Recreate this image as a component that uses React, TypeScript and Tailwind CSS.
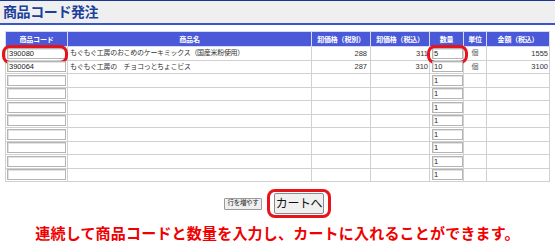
import React from 'react'

type Row = {
  code: string
  name: string
  ex: string
  inc: string
  qty: string
  unit: string
  amt: string
  mark?: boolean
}

const rows: Row[] = [
  {
    code: '390080',
    name: 'もぐもぐ工房のおこめのケーキミックス（国産米粉使用）',
    ex: '288',
    inc: '311',
    qty: '5',
    unit: '個',
    amt: '1555',
    mark: true,
  },
  {
    code: '390064',
    name: 'もぐもぐ工房の　チョコっとちょこビス',
    ex: '287',
    inc: '310',
    qty: '10',
    unit: '個',
    amt: '3100',
  },
  ...Array.from({ length: 8 }, () => ({ code: '', name: '', ex: '', inc: '', qty: '1', unit: '', amt: '' })),
]

const heads = ['商品コード', '商品名', '卸価格（税別）', '卸価格（税込）', '数量', '単位', '金額（税込）']

function Box({ value, width }: { value: string; width: string }) {
  return (
    <input
      readOnly
      value={value}
      className={`${width} block h-[11px] border border-[#b4b4b4] bg-white px-[1px] text-[7.5px] leading-none text-[#222] shadow-[inset_1px_1px_0_#e2e2e2] outline-none`}
    />
  )
}

export default function App() {
  return (
    <div
      className="relative h-[252px] w-[555px] overflow-hidden bg-white"
      style={{ fontFamily: '"Liberation Sans", "Noto Sans CJK JP", sans-serif' }}
    >
      <div className="h-[25px] border-t border-[#1b3794] border-b-2 border-b-[#3a57c9] bg-[#efefef] px-[3px]">
        <h1 className="text-[14px] font-bold leading-[22px] tracking-[-0.4px] text-[#1c3f9e]">商品コード発注</h1>
      </div>

      <table className="ml-[5px] mt-[6px] w-[544px] table-fixed border-collapse">
        <colgroup>
          <col className="w-[62px]" />
          <col className="w-[244px]" />
          <col className="w-[59px]" />
          <col className="w-[59px]" />
          <col className="w-[34px]" />
          <col className="w-[23px]" />
          <col className="w-[63px]" />
        </colgroup>
        <thead>
          <tr className="h-[15px] bg-[#4a59d8]">
            {heads.map((h) => (
              <th
                key={h}
                className="border border-[#d6dbf4] p-0 text-center text-[7px] font-bold leading-none tracking-[-0.2px] text-white"
              >
                {h}
              </th>
            ))}
          </tr>
        </thead>
        <tbody className="text-[7px] text-[#333]">
          {rows.map((r, i) => (
            <tr key={i} className="h-[13.5px]">
              <td className="relative border border-[#d0d0d0] py-0 pl-[1px] pr-0">
                <Box value={r.code} width="w-[59px]" />
                {r.mark && (
                  <span className="pointer-events-none absolute -bottom-[4px] -left-[4px] -right-[1px] -top-[2px] rounded-[8px] border-[3px] border-[#e8141c]" />
                )}
              </td>
              <td className="truncate border border-[#d0d0d0] py-0 pl-[2px] tracking-[-0.3px]">{r.name}</td>
              <td className="border border-[#d0d0d0] py-0 pr-[3px] text-right text-[7.5px]">{r.ex}</td>
              <td className="border border-[#d0d0d0] py-0 pr-[1px] text-right text-[7.5px]">{r.inc}</td>
              <td className="relative border border-[#d0d0d0] py-0 pl-[2px] pr-0">
                <Box value={r.qty} width="w-[31px]" />
                {r.mark && (
                  <span className="pointer-events-none absolute -bottom-[4px] -left-[3px] -right-[5px] -top-[2px] rounded-[8px] border-[3px] border-[#e8141c]" />
                )}
              </td>
              <td className="border border-[#d0d0d0] p-0 text-center text-[#555]">{r.unit}</td>
              <td className="border border-[#d0d0d0] py-0 pr-[1px] text-right text-[7.5px]">{r.amt}</td>
            </tr>
          ))}
        </tbody>
      </table>

      <div className="mt-[7px] flex items-center justify-center gap-[5px]">
        <button className="h-[12px] w-[38px] rounded-[1px] border border-[#9a9a9a] bg-[#efefef] p-0 text-[6.5px] leading-none tracking-[-0.3px] text-[#222]">
          行を増やす
        </button>
        <span className="rounded-[8px] border-[3px] border-[#e8141c] px-[4px] py-[1px]">
          <button className="block h-[21px] w-[50px] rounded-[2px] border border-[#8a8a8a] bg-[#f0f0f0] p-0 text-[12px] leading-none tracking-[-0.4px] text-[#111]">
            カートへ
          </button>
        </span>
      </div>

      <p className="mt-[7px] text-center text-[15px] font-bold leading-[18px] tracking-[0.2px] text-[#f00000]">
        連続して商品コードと数量を入力し、カートに入れることができます。
      </p>
    </div>
  )
}
